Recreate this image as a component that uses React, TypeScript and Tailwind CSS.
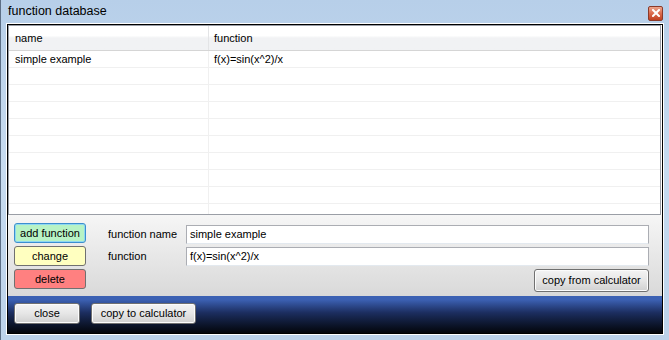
import React from "react";

const FONT = { fontFamily: '"Liberation Sans", Arial, sans-serif' };

const ROWS = [
  { name: "simple example", fn: "f(x)=sin(x^2)/x" },
  { name: "", fn: "" },
  { name: "", fn: "" },
  { name: "", fn: "" },
  { name: "", fn: "" },
  { name: "", fn: "" },
  { name: "", fn: "" },
  { name: "", fn: "" },
  { name: "", fn: "" },
];

function CloseGlyph() {
  return (
    <svg width="8" height="8" viewBox="0 0 8 8">
      <path d="M1 1 L7 7 M7 1 L1 7" stroke="#fff" strokeWidth="2" strokeLinecap="square" />
    </svg>
  );
}

function AeroButton({ label, className }: { label: string; className: string }) {
  return (
    <button
      className={`h-[21px] rounded-[3px] border border-[#707070] bg-gradient-to-b from-[#f4f4f4] via-[#e6e6e6] to-[#d0d0d0] text-[11px] text-black shadow-[inset_0_0_0_1px_#fcfcfc] ${className}`}
    >
      {label}
    </button>
  );
}

export default function App() {
  return (
    <div
      className="w-[669px] h-[340px] flex flex-col bg-gradient-to-b from-[#b7cfe9] via-[#c7dbf0] to-[#bcd2ea] border-l border-[#5d6f86] pl-[5px] pr-[5px] pb-[5px] overflow-hidden"
      style={FONT}
    >
      {/* title bar */}
      <div className="h-[23px] flex items-center justify-between pl-[2px] pr-[1px]">
        <span className="text-[12.5px] text-black">function database</span>
        <div className="w-[15px] h-[15px] mt-[3px] rounded-[2px] border border-[#8a3a2a] bg-gradient-to-b from-[#eba48c] via-[#da6a4c] to-[#c0401f] flex items-center justify-center">
          <CloseGlyph />
        </div>
      </div>

      {/* client area */}
      <div className="flex-1 border border-white">
        <div className="h-full border border-black flex flex-col bg-white">
          {/* list view */}
          <div className="h-[190px] mr-[1px] border border-[#9a9ea6] bg-white flex flex-col overflow-hidden">
            <div className="h-[25px] shrink-0 flex border-b border-[#d5d5d5] bg-gradient-to-b from-white from-40% to-[#f1f2f4] to-50% text-[11px] text-black">
              <div className="w-[200px] pl-[6px] flex items-center border-r border-[#e3e4e6]">name</div>
              <div className="flex-1 pl-[5px] flex items-center">function</div>
            </div>
            {ROWS.map((r, i) => (
              <div key={i} className="h-[17px] shrink-0 flex border-b border-[#f0f0f0] text-[11px] text-black">
                <div className="w-[200px] pl-[6px] flex items-center border-r border-[#f0f0f0]">{r.name}</div>
                <div className="flex-1 pl-[5px] flex items-center">{r.fn}</div>
              </div>
            ))}
            <div className="flex-1 flex">
              <div className="w-[200px] border-r border-[#f0f0f0]" />
            </div>
          </div>

          {/* edit panel */}
          <div className="h-[81px] flex pl-[6px] pt-[8px] pr-[13px] bg-gradient-to-b from-[#f6f6f6] to-[#d9d9d9] text-[11px] text-black">
            <div className="w-[72px] flex flex-col gap-[3px]">
              <button className="h-[20px] rounded-[3px] border border-[#3c8fcf] bg-[#b7f3c5] shadow-[inset_0_0_0_1px_#8fd8f0] text-[11px]">
                add function
              </button>
              <button className="h-[20px] rounded-[3px] border border-[#707070] bg-[#ffffc0] text-[11px]">
                change
              </button>
              <button className="h-[20px] rounded-[3px] border border-[#707070] bg-[#ff8080] text-[11px]">
                delete
              </button>
            </div>
            <div className="flex-1 ml-[22px] pt-[2px] flex flex-col">
              <div className="flex items-center">
                <span className="w-[78px]">function name</span>
                <div className="flex-1 h-[19px] bg-white border border-[#abadb3] border-b-[#e3e9ef] flex items-center pl-[3px]">
                  simple example
                </div>
              </div>
              <div className="flex items-center mt-[3px]">
                <span className="w-[78px]">function</span>
                <div className="flex-1 h-[19px] bg-white border border-[#abadb3] border-b-[#e3e9ef] flex items-center pl-[3px]">
                  f(x)=sin(x^2)/x
                </div>
              </div>
              <div className="flex justify-end mt-[3px]">
                <AeroButton label="copy from calculator" className="w-[115px] h-[23px]" />
              </div>
            </div>
          </div>

          {/* bottom band */}
          <div className="flex-1 flex items-start gap-[11px] pl-[6px] pt-[7px] bg-gradient-to-b from-[#3c61b3] from-10% via-[#1c2e60] via-45% to-[#04060c]">
            <AeroButton label="close" className="w-[66px]" />
            <AeroButton label="copy to calculator" className="w-[105px]" />
          </div>
        </div>
      </div>
    </div>
  );
}
